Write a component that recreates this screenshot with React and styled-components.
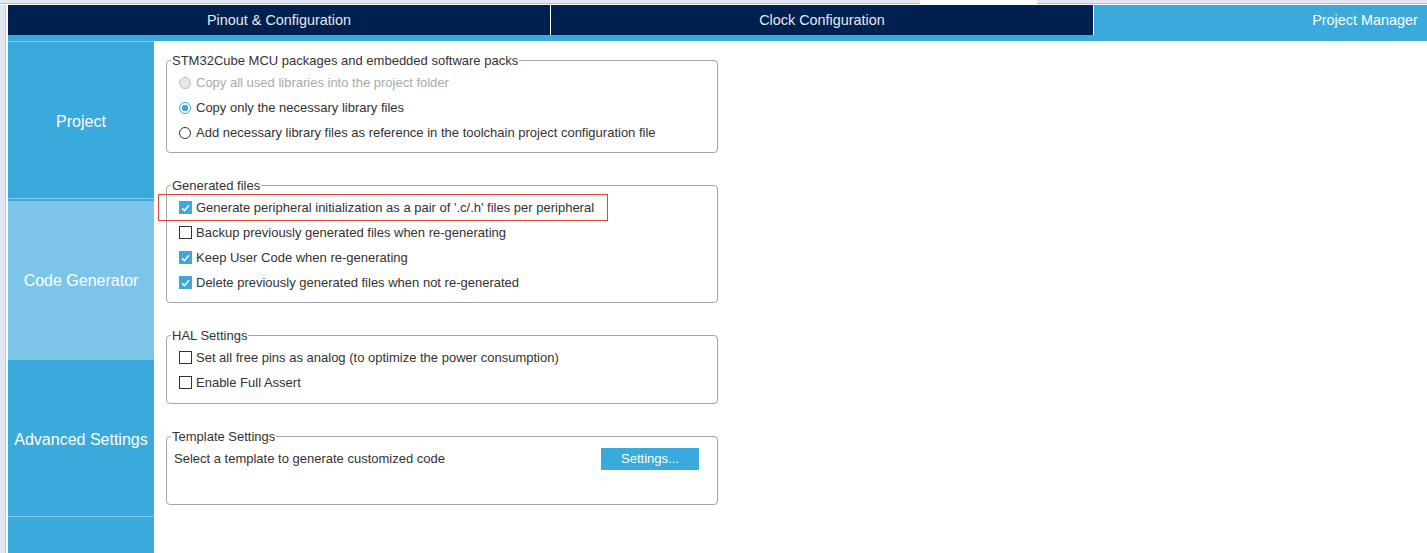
import styled, { createGlobalStyle } from 'styled-components'

const TABS = [
  { label: 'Pinout & Configuration' },
  { label: 'Clock Configuration' },
  { label: 'Project Manager', active: true },
]

const NAV = [
  { label: 'Project' },
  { label: 'Code Generator', active: true },
  { label: 'Advanced Settings' },
  { label: '' },
]

const GlobalStyle = createGlobalStyle`
  html, body {
    margin: 0;
    padding: 0;
    height: 100%;
    overflow: hidden;
    background: #fff;
  }
  body {
    font-family: 'Liberation Sans', Arial, sans-serif;
  }
  #root { height: 100%; }
`

const Page = styled.div`
  display: flex;
  flex-direction: column;
  height: 100%;
`

const TopStrip = styled.div`
  display: flex;
  height: 5px;
  flex-shrink: 0;
`

const TopSegment = styled.div`
  width: ${({ $w }) => ($w ? `${$w}px` : 'auto')};
  flex: ${({ $w }) => ($w ? 'none' : '1')};
  background: ${({ $blank }) =>
    $blank ? '#fff' : 'linear-gradient(to bottom, #e3e7f3 0 3px, #b7bed2 3px 4px, #fff 4px)'};
`

const Body = styled.div`
  flex: 1;
  display: flex;
  min-height: 0;
`

const LeftEdge = styled.div`
  width: 8px;
  flex-shrink: 0;
  background: linear-gradient(to right, #e3e7f3 0 5px, #c3c8da 5px 6px, #fff 6px);
`

const Main = styled.div`
  flex: 1;
  display: flex;
  flex-direction: column;
  min-width: 0;
  overflow: hidden;
`

const TabBar = styled.div`
  display: flex;
  height: 30px;
  flex-shrink: 0;
  background: #00204f;
  border-bottom: 6px solid #3aa9dc;
`

const Tab = styled.div`
  width: 542px;
  flex-shrink: 0;
  display: flex;
  align-items: center;
  justify-content: center;
  font-size: 14.4px;
  color: ${({ $active }) => ($active ? '#fff' : '#e6e9ef')};
  background: ${({ $active }) => ($active ? '#3aa9dc' : '#00204f')};
  border-right: 1px solid #fff;
`

const Workspace = styled.div`
  flex: 1;
  display: flex;
  min-height: 0;
`

const Sidebar = styled.nav`
  width: 146px;
  flex-shrink: 0;
  background: #3aa9dc;
  border-top: 1px solid #7fc7ea;
  display: flex;
  flex-direction: column;
`

const NavItem = styled.div`
  height: 159px;
  flex-shrink: 0;
  display: flex;
  align-items: center;
  justify-content: center;
  font-size: 16px;
  color: #fff;
  background: ${({ $active }) => ($active ? '#7cc5e8' : '#3aa9dc')};
  box-shadow: inset 0 -2px 0 ${({ $active }) => ($active ? '#7cc5e8' : '#3aa9dc')},
    inset 0 -3px 0 #80c8eb;
`

const Panel = styled.div`
  flex: 1;
  padding: 12px 0 0 12px;
  display: flex;
  flex-direction: column;
  gap: 25px;
`

const Group = styled.fieldset`
  width: 552px;
  box-sizing: border-box;
  margin: 0;
  padding: 0;
  border: 1px solid #a2a5aa;
  border-radius: 4px;
  min-inline-size: 0;
`

const Legend = styled.legend`
  margin-left: 4px;
  padding: 0 1px;
  font-size: 13px;
  line-height: 15px;
  color: #333;
`

const GroupBody = styled.div`
  padding: 2px 0 ${({ $padBottom = 7 }) => $padBottom}px ${({ $padLeft = 12 }) => $padLeft}px;
`

const Row = styled.div`
  position: relative;
  height: 25px;
  display: flex;
  align-items: center;
  gap: 4px;
  font-size: 13px;
  color: ${({ $disabled }) => ($disabled ? '#a9a9a9' : '#333')};
`

const Highlight = styled.span`
  position: absolute;
  left: -21px;
  top: -1px;
  width: 448px;
  height: 25px;
  border: 1px solid #e5413d;
  pointer-events: none;
`

const Radio = styled.span`
  width: 12px;
  height: 12px;
  margin-right: 1px;
  box-sizing: border-box;
  border-radius: 50%;
  flex-shrink: 0;
  border: 1px solid
    ${({ $disabled, $checked }) => ($disabled ? '#bcbcbc' : $checked ? '#3aa9dc' : '#333')};
  background: ${({ $disabled, $checked }) =>
    $disabled
      ? '#e6e6e6'
      : $checked
        ? 'radial-gradient(circle, #3aa9dc 0 3px, #fff 3.5px)'
        : '#fff'};
`

const Box = styled.span`
  width: 13px;
  height: 13px;
  box-sizing: border-box;
  flex-shrink: 0;
  display: flex;
  align-items: center;
  justify-content: center;
  background: ${({ $checked }) => ($checked ? '#3ea7dc' : '#fff')};
  border: 1px solid ${({ $checked }) => ($checked ? '#3ea7dc' : '#333')};
`

const TemplateRow = styled.div`
  height: 25px;
  display: flex;
  align-items: center;
  padding-right: 18px;
  font-size: 13px;
  color: #333;
`

const Spacer = styled.div`
  height: 25px;
`

const SettingsButton = styled.button`
  margin-left: auto;
  width: 98px;
  height: 22px;
  border: none;
  background: #3aa9dc;
  color: #fff;
  font-family: 'Liberation Sans', Arial, sans-serif;
  font-size: 13px;
  padding: 0;
`

function Check({ checked }) {
  return (
    <Box $checked={checked}>
      {checked && (
        <svg width="9" height="8" viewBox="0 0 9 8">
          <path d="M1 4.2 L3.4 6.6 L8 1.2" fill="none" stroke="#fff" strokeWidth="1.4" />
        </svg>
      )}
    </Box>
  )
}

const RADIOS = [
  { label: 'Copy all used libraries into the project folder', disabled: true },
  { label: 'Copy only the necessary library files', checked: true },
  { label: 'Add necessary library files as reference in the toolchain project configuration file' },
]

const GENERATED = [
  { label: "Generate peripheral initialization as a pair of '.c/.h' files per peripheral", checked: true, marked: true },
  { label: 'Backup previously generated files when re-generating' },
  { label: 'Keep User Code when re-generating', checked: true },
  { label: 'Delete previously generated files when not re-generated', checked: true },
]

const HAL = [
  { label: 'Set all free pins as analog (to optimize the power consumption)' },
  { label: 'Enable Full Assert' },
]

export default function App() {
  return (
    <Page>
      <GlobalStyle />
      <TopStrip>
        <TopSegment $w={920} />
        <TopSegment $w={117} $blank />
        <TopSegment />
      </TopStrip>
      <Body>
        <LeftEdge />
        <Main>
          <TabBar>
            {TABS.map((t) => (
              <Tab key={t.label} $active={t.active}>{t.label}</Tab>
            ))}
          </TabBar>
          <Workspace>
            <Sidebar>
              {NAV.map((n, i) => (
                <NavItem key={i} $active={n.active}>{n.label}</NavItem>
              ))}
            </Sidebar>
            <Panel>
              <Group>
                <Legend>STM32Cube MCU packages and embedded software packs</Legend>
                <GroupBody>
                  {RADIOS.map((r) => (
                    <Row key={r.label} $disabled={r.disabled}>
                      <Radio $disabled={r.disabled} $checked={r.checked} />
                      {r.label}
                    </Row>
                  ))}
                </GroupBody>
              </Group>
              <Group>
                <Legend>Generated files</Legend>
                <GroupBody>
                  {GENERATED.map((g) => (
                    <Row key={g.label}>
                      {g.marked && <Highlight />}
                      <Check checked={g.checked} />
                      {g.label}
                    </Row>
                  ))}
                </GroupBody>
              </Group>
              <Group>
                <Legend>HAL Settings</Legend>
                <GroupBody $padBottom={8}>
                  {HAL.map((h) => (
                    <Row key={h.label}>
                      <Check checked={h.checked} />
                      {h.label}
                    </Row>
                  ))}
                </GroupBody>
              </Group>
              <Group>
                <Legend>Template Settings</Legend>
                <GroupBody $padLeft={7} $padBottom={8}>
                  <TemplateRow>
                    Select a template to generate customized code
                    <SettingsButton>Settings...</SettingsButton>
                  </TemplateRow>
                  <Spacer />
                </GroupBody>
              </Group>
            </Panel>
          </Workspace>
        </Main>
      </Body>
    </Page>
  )
}
